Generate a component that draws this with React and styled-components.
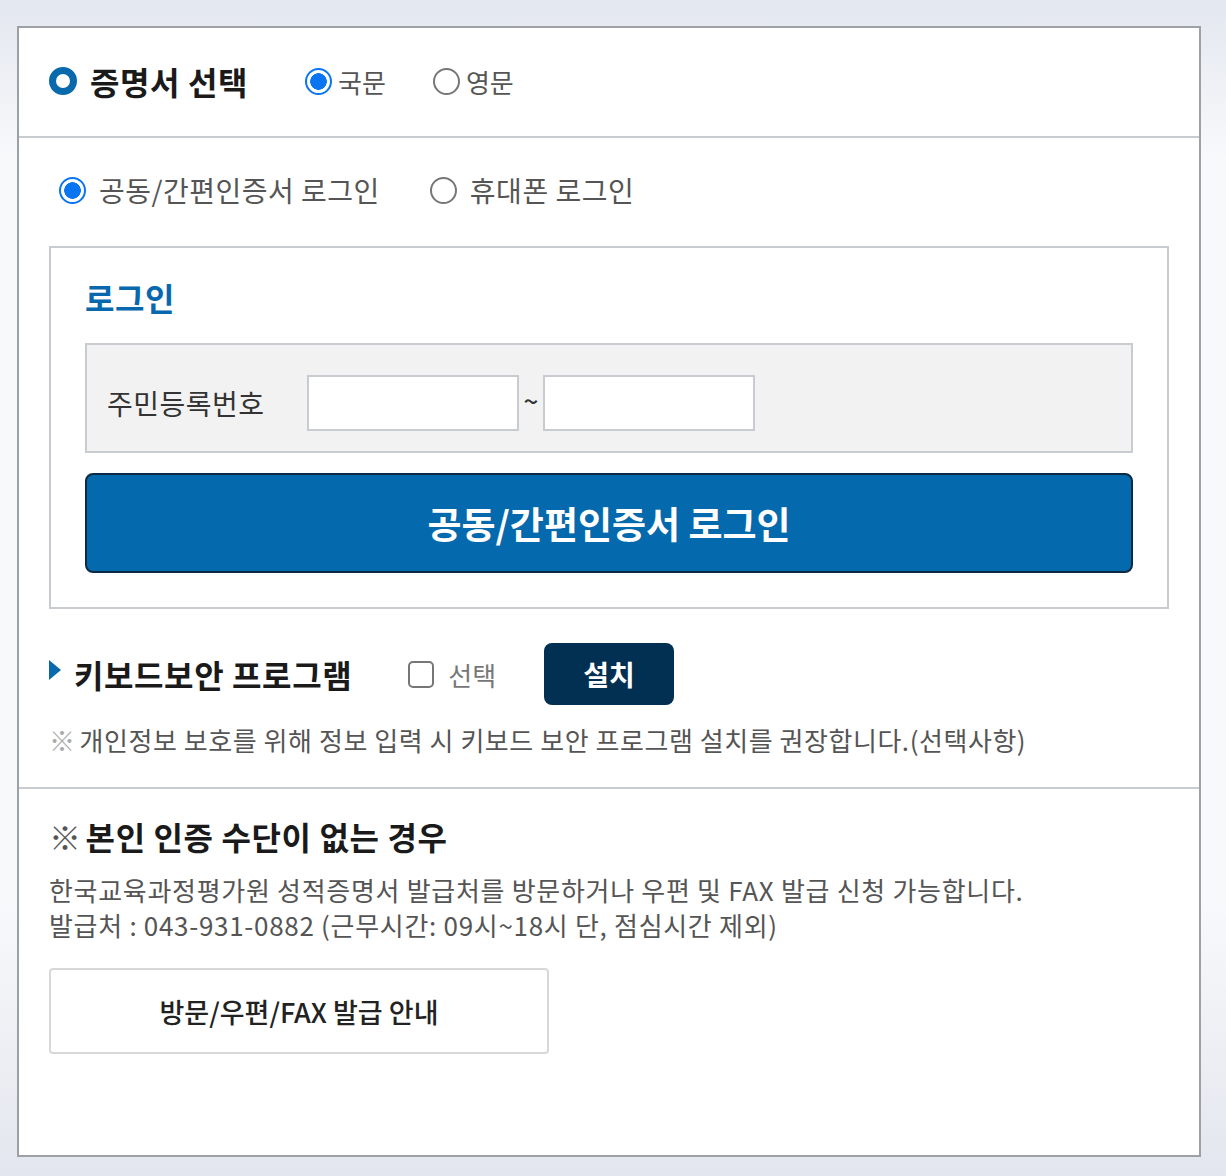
import React, { useState } from "react";
import styled, { createGlobalStyle } from "styled-components";

const GlobalStyle = createGlobalStyle`
  html, body {
    margin: 0;
    padding: 0;
  }
  body {
    font-family: "Noto Sans CJK KR", "Noto Sans", sans-serif;
    background: linear-gradient(
      to bottom,
      #e3e7ef 0px,
      #f8f9fb 160px,
      #f8f9fb 900px,
      #e3e6ee 1176px
    );
    min-height: 1176px;
  }
  * {
    box-sizing: border-box;
  }
`;

const Page = styled.div`
  padding: 26px 25px 19px 17px;
`;

const Card = styled.div`
  background: #fff;
  border: 2px solid #9da0a4;
  height: 1131px;
`;

const TitleBar = styled.div`
  display: flex;
  align-items: center;
  height: 110px;
  padding: 0 0 2px 30px;
  border-bottom: 2px solid #c8cbd0;
`;

const Ring = styled.span`
  width: 28px;
  height: 28px;
  border-radius: 50%;
  border: 7px solid #0869ad;
  margin-right: 13px;
  flex-shrink: 0;
`;

const Heading = styled.h2`
  margin: 0;
  font-size: 32px;
  line-height: 44px;
  font-weight: 700;
  color: #1a1a1a;
  letter-spacing: 0.6px;
  margin-right: ${(p) => p.$gap || 0}px;
`;

const RadioGroup = styled.div`
  display: flex;
  align-items: center;
  gap: ${(p) => p.$gap}px;
`;

const RadioLabel = styled.label`
  display: flex;
  align-items: center;
  gap: ${(p) => p.$gap}px;
  font-size: ${(p) => p.$size}px;
  letter-spacing: ${(p) => p.$spacing || 0}px;
  color: #555;
  cursor: pointer;
`;

const Radio = styled.input.attrs({ type: "radio" })`
  appearance: none;
  margin: 0;
  width: 27px;
  height: 27px;
  border-radius: 50%;
  border: 2px solid #767676;
  background: #fff;
  flex-shrink: 0;

  &:checked {
    border-color: #0a75f0;
    background: radial-gradient(circle, #0a75f0 0 8px, #fff 8.6px);
  }
`;

const Section = styled.div`
  padding: ${(p) => p.$pad};
  border-bottom: ${(p) => (p.$divider ? "2px solid #c8cbd0" : "none")};
`;

const LoginTypeRow = styled(RadioGroup)`
  padding: 32px 0 0 10px;
  height: 72px;
`;

const LoginBox = styled.div`
  margin-top: 36px;
  border: 2px solid #c8cbd0;
  padding: 25px 34px 34px;
`;

const LoginTitle = styled.h3`
  margin: 0 0 22px;
  font-size: 32px;
  font-weight: 700;
  letter-spacing: 0.5px;
  color: #0868ae;
  line-height: 48px;
`;

const IdBox = styled.div`
  display: flex;
  align-items: center;
  background: #f2f2f2;
  border: 2px solid #c8cbd0;
  padding: 30px 20px 20px;
`;

const IdLabel = styled.span`
  width: 200px;
  font-size: 28px;
  letter-spacing: 0.5px;
  color: #333;
`;

const IdInput = styled.input`
  width: 212px;
  height: 56px;
  border: 2px solid #c8cbd0;
  background: #fff;
  outline: none;
`;

const Tilde = styled.span`
  width: 24px;
  text-align: center;
  font-size: 26px;
  font-weight: 500;
  line-height: 1;
  margin-top: -6px;
  color: #333;
`;

const LoginButton = styled.button`
  display: block;
  width: 100%;
  height: 100px;
  margin-top: 20px;
  background: #0569ae;
  border: 2px solid #0b2a44;
  border-radius: 8px;
  color: #fff;
  font-family: inherit;
  font-size: 37px;
  font-weight: 700;
  cursor: pointer;
`;

const KeyboardRow = styled.div`
  display: flex;
  align-items: center;
  margin-top: 34px;
`;

const Triangle = styled.span`
  width: 0;
  height: 0;
  border-top: 10px solid transparent;
  border-bottom: 10px solid transparent;
  border-left: 12px solid #0869ad;
  margin-right: 13px;
  margin-top: -8px;
`;

const CheckLabel = styled.label`
  display: flex;
  align-items: center;
  gap: 14px;
  font-size: 26px;
  color: #777;
  margin-right: 48px;
`;

const Checkbox = styled.input.attrs({ type: "checkbox" })`
  appearance: none;
  margin: 0;
  width: 26px;
  height: 27px;
  border: 2px solid #767676;
  border-radius: 5px;
  background: #fff;
`;

const InstallButton = styled.button`
  width: 130px;
  height: 62px;
  background: #023052;
  border: none;
  border-radius: 8px;
  color: #fff;
  font-family: inherit;
  font-size: 28px;
  font-weight: 700;
`;

const Note = styled.p`
  margin: 18px 0 0;
  font-size: 26px;
  line-height: 34px;
  color: #555;
  letter-spacing: 0.55px;
`;

const Mark = styled.span`
  color: ${(p) => p.$color};
  margin-right: 4px;
`;

const Description = styled.p`
  margin: 14px 0 0;
  font-size: 26px;
  line-height: 35px;
  color: #555;
  letter-spacing: 0.7px;
`;

const GuideButton = styled.button`
  display: block;
  width: 500px;
  height: 86px;
  margin-top: 26px;
  background: #fff;
  border: 2px solid #d8d8d8;
  border-radius: 4px;
  font-family: inherit;
  font-size: 27px;
  font-weight: 500;
  color: #222;
  cursor: pointer;
`;

export default function App() {
  const [lang, setLang] = useState("ko");
  const [method, setMethod] = useState("cert");

  return (
    <>
      <GlobalStyle />
      <Page>
        <Card>
          <TitleBar>
            <Ring />
            <Heading $gap={57}>증명서 선택</Heading>
            <RadioGroup $gap={47}>
              <RadioLabel $gap={6} $size={26}>
                <Radio
                  name="lang"
                  checked={lang === "ko"}
                  onChange={() => setLang("ko")}
                />
                국문
              </RadioLabel>
              <RadioLabel $gap={6} $size={26}>
                <Radio
                  name="lang"
                  checked={lang === "en"}
                  onChange={() => setLang("en")}
                />
                영문
              </RadioLabel>
            </RadioGroup>
          </TitleBar>

          <Section $pad="0 30px 30px" $divider>
            <LoginTypeRow $gap={50}>
              <RadioLabel $gap={13} $size={28} $spacing={0.5}>
                <Radio
                  name="method"
                  checked={method === "cert"}
                  onChange={() => setMethod("cert")}
                />
                공동/간편인증서 로그인
              </RadioLabel>
              <RadioLabel $gap={13} $size={28} $spacing={0.5}>
                <Radio
                  name="method"
                  checked={method === "phone"}
                  onChange={() => setMethod("phone")}
                />
                휴대폰 로그인
              </RadioLabel>
            </LoginTypeRow>

            <LoginBox>
              <LoginTitle>로그인</LoginTitle>
              <IdBox>
                <IdLabel>주민등록번호</IdLabel>
                <IdInput />
                <Tilde>~</Tilde>
                <IdInput type="password" />
              </IdBox>
              <LoginButton>공동/간편인증서 로그인</LoginButton>
            </LoginBox>

            <KeyboardRow>
              <Triangle />
              <Heading $gap={56}>키보드보안 프로그램</Heading>
              <CheckLabel>
                <Checkbox />
                선택
              </CheckLabel>
              <InstallButton>설치</InstallButton>
            </KeyboardRow>
            <Note>
              <Mark $color="#aaa">※</Mark>개인정보 보호를 위해 정보 입력 시 키보드 보안
              프로그램 설치를 권장합니다.(선택사항)
            </Note>
          </Section>

          <Section $pad="25px 30px">
            <Heading>
              <Mark $color="#555">※</Mark>본인 인증 수단이 없는 경우
            </Heading>
            <Description>
              한국교육과정평가원 성적증명서 발급처를 방문하거나 우편 및 FAX 발급
              신청 가능합니다.
              <br />
              발급처 : 043-931-0882 (근무시간: 09시~18시 단, 점심시간 제외)
            </Description>
            <GuideButton>방문/우편/FAX 발급 안내</GuideButton>
          </Section>
        </Card>
      </Page>
    </>
  );
}
